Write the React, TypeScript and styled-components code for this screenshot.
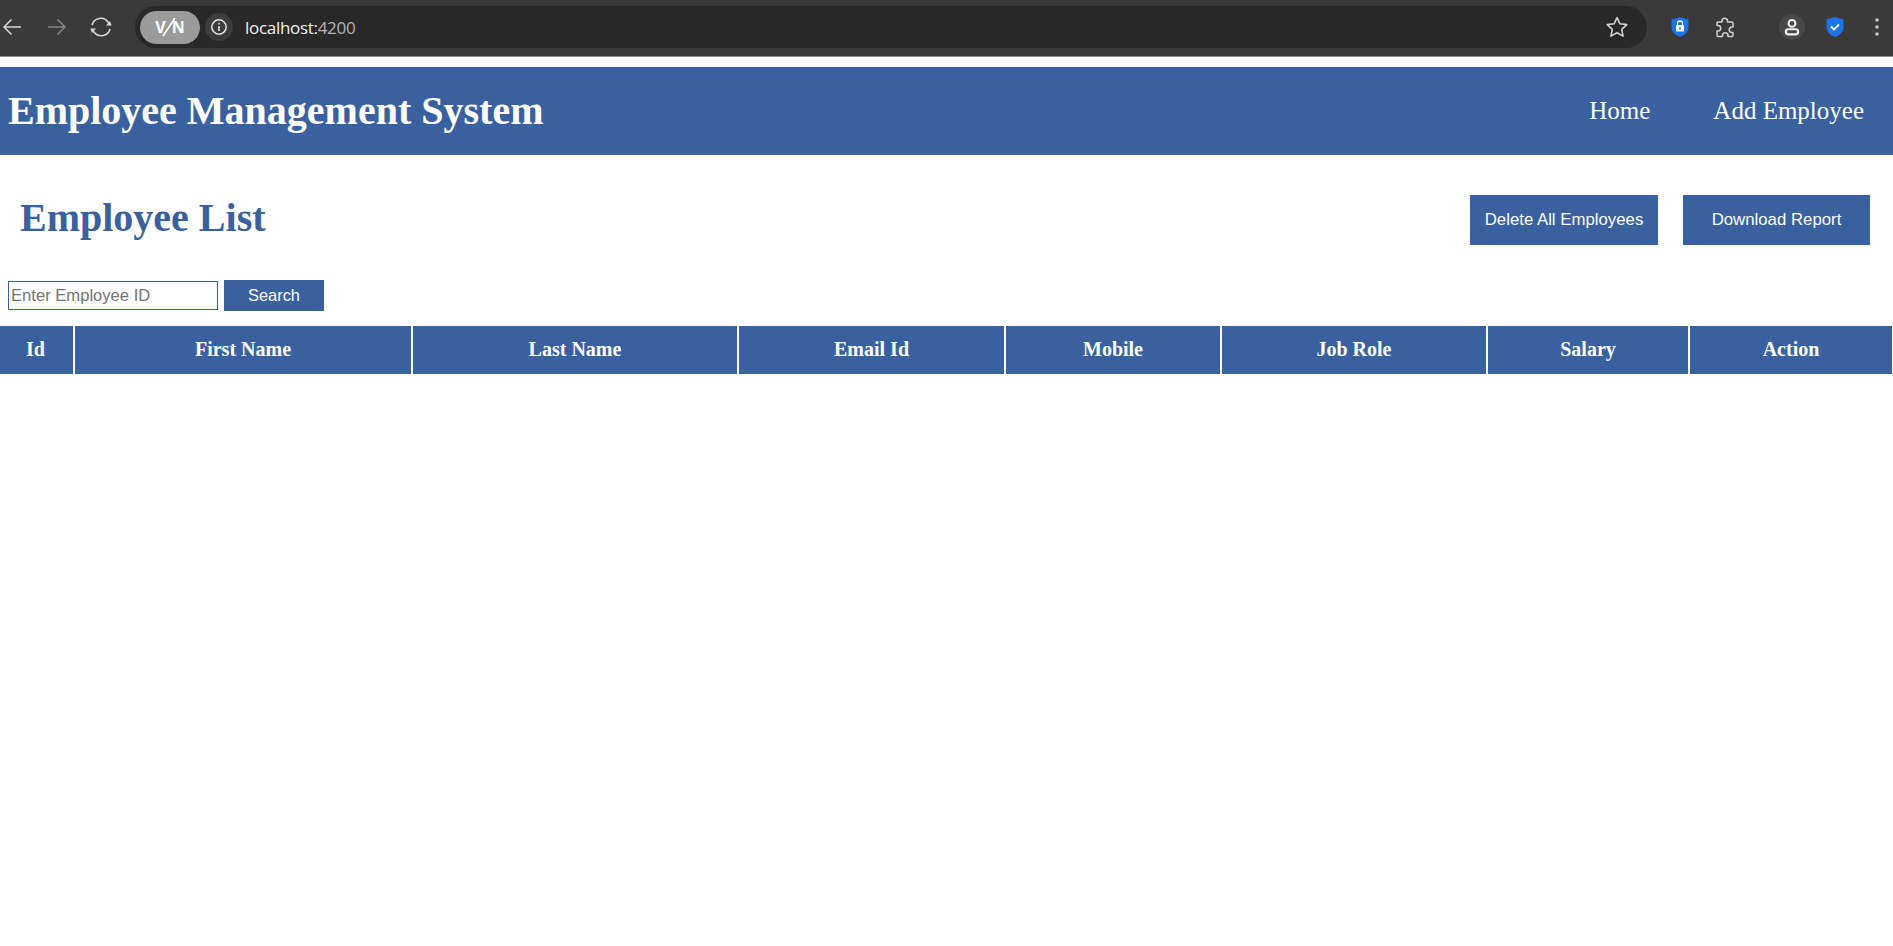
import React from "react";
import styled, { createGlobalStyle } from "styled-components";

const BLUE = "#3a619f";

const Global = createGlobalStyle`
  html, body { margin: 0; padding: 0; background: #fff; }
  body { font-family: "Liberation Serif", "Times New Roman", serif; }
  * { box-sizing: border-box; }
`;

const Page = styled.div`
  width: 1893px;
  height: 946px;
  overflow: hidden;
  background: #fff;
`;

const BrowserBar = styled.div`
  height: 57px;
  background: #3a3a3a;
  border-bottom: 1px solid #8a8a8a;
  display: flex;
  align-items: center;
  padding: 0 0 2px 0;
`;

const NavIcons = styled.div`
  width: 135px;
  display: flex;
  align-items: center;
  flex: none;
`;

const IconSlot = styled.span<{ $w: number; $ml?: number }>`
  display: flex;
  align-items: center;
  justify-content: center;
  flex: none;
  width: ${(p) => p.$w}px;
  margin-left: ${(p) => p.$ml ?? 0}px;
`;

const AddressBar = styled.div`
  width: 1512px;
  height: 42px;
  flex: none;
  border-radius: 21px;
  background: #282828;
  display: flex;
  align-items: center;
  padding: 0 18px 0 5px;
`;

const VpnPill = styled.div`
  width: 60px;
  height: 33px;
  border-radius: 17px;
  background: #9b9b9b;
  color: #fff;
  font: 700 16px "Open Sans", "Liberation Sans", sans-serif;
  display: flex;
  align-items: center;
  justify-content: center;
  flex: none;
  svg { margin: 0 -4px; }
`;

const InfoChip = styled.div`
  width: 28px;
  height: 28px;
  margin-left: 5px;
  border-radius: 50%;
  background: #3c3c3c;
  display: flex;
  align-items: center;
  justify-content: center;
  flex: none;
`;

const Url = styled.div`
  margin-left: 12px;
  font: 400 17px "Open Sans", "Noto Sans", sans-serif;
  letter-spacing: -0.3px;
  color: #f0f0f0;
  flex: 1;
  span { color: #b4b4b4; }
`;

const Extensions = styled.div`
  flex: 1;
  display: flex;
  align-items: center;
`;

const Avatar = styled.div`
  width: 26px;
  height: 26px;
  border-radius: 50%;
  background: #484848;
  display: flex;
  align-items: center;
  justify-content: center;
  flex: none;
  margin-left: 43px;
`;

const Gap = styled.div`
  height: 10px;
`;

const Header = styled.header`
  height: 88px;
  background: ${BLUE};
  display: flex;
  align-items: center;
  justify-content: space-between;
  padding: 0 29px 0 8px;
  color: #fff;
`;

const Brand = styled.div`
  font-size: 40px;
  font-weight: 700;
  margin-top: -2px;
`;

const Nav = styled.nav`
  display: flex;
  gap: 63px;
  font-size: 25px;
`;

const TitleRow = styled.div`
  height: 125px;
  display: flex;
  align-items: center;
  justify-content: space-between;
  padding: 0 23px 0 20px;
`;

const Title = styled.h2`
  margin: 0;
  font-size: 40px;
  font-weight: 700;
  color: ${BLUE};
`;

const Actions = styled.div`
  display: flex;
  gap: 25px;
  margin-top: 5px;
`;

const ActionButton = styled.button<{ $w: number }>`
  width: ${(p) => p.$w}px;
  height: 50px;
  border: 0;
  padding: 0;
  background: ${BLUE};
  color: #fff;
  font: 400 16.8px "Liberation Sans", Arial, sans-serif;
`;

const SearchRow = styled.div`
  display: flex;
  align-items: center;
  gap: 6px;
  height: 31px;
  padding-left: 8px;
`;

const SearchInput = styled.input`
  width: 210px;
  height: 29px;
  border: 1px solid ${BLUE};
  padding: 0 2px;
  font: 400 16.6px "Liberation Sans", Arial, sans-serif;
  background: #fff;
  &::placeholder { color: #757575; opacity: 1; }
`;

const SearchButton = styled.button`
  width: 100px;
  height: 31px;
  border: 0;
  background: ${BLUE};
  color: #fff;
  font: 400 16.4px "Liberation Sans", Arial, sans-serif;
`;

const Table = styled.table`
  margin-top: 15px;
  width: 1893px;
  table-layout: fixed;
  border-collapse: separate;
  border-spacing: 0;
`;

const HeadCell = styled.th<{ $w: number }>`
  width: ${(p) => p.$w}px;
  height: 48px;
  padding: 0 0 1px;
  background: ${BLUE};
  color: #fff;
  font-size: 20px;
  font-weight: 700;
  text-align: center;
  border-right: 2px solid #fff;
  &:first-child { padding-right: 2px; }
  &:last-child { border-right-width: 1px; }
`;

const columns: [string, number][] = [
  ["Id", 75],
  ["First Name", 338],
  ["Last Name", 326],
  ["Email Id", 267],
  ["Mobile", 216],
  ["Job Role", 266],
  ["Salary", 202],
  ["Action", 203],
];

const Back = () => (
  <svg width="20" height="20" viewBox="0 0 20 20" fill="none" stroke="#d6d6d6" strokeWidth="1.5">
    <path d="M19 10H2M9.5 2.500 2 10l7.500 7.500" />
  </svg>
);

export default function App() {
  return (
    <Page>
      <Global />
      <BrowserBar>
        <NavIcons>
          <IconSlot $w={20} $ml={2}><Back /></IconSlot>
          <IconSlot $w={20} $ml={25}>
            <svg width="20" height="20" viewBox="0 0 20 20" fill="none" stroke="#858585" strokeWidth="1.5">
              <path d="M1 10h17M10.500 2.500 18 10l-7.500 7.500" />
            </svg>
          </IconSlot>
          <IconSlot $w={26} $ml={21}>
            <svg width="26" height="24" viewBox="0 0 26 24" fill="none" stroke="#d6d6d6" strokeWidth="1.6">
              <path d="M4 10a9 9 0 0 1 16-3l2 3" />
              <path d="M22 14a9 9 0 0 1-16 3l-2-3" />
              <path d="m18 10.500 5.500 0 0-.5-1.500-4z" fill="#d6d6d6" stroke="none" />
              <path d="m8 13.500-5.500 0 0 .5 1.500 4z" fill="#d6d6d6" stroke="none" />
            </svg>
          </IconSlot>
        </NavIcons>
        <AddressBar>
          <VpnPill>
            <span>V</span>
            <svg width="14" height="20" viewBox="0 0 14 20" fill="none" stroke="#fff" strokeWidth="1.6">
              <path d="M1 19 13 1" />
            </svg>
            <span>N</span>
          </VpnPill>
          <InfoChip>
            <svg width="18" height="18" viewBox="0 0 18 18" fill="none" stroke="#e6e6e6" strokeWidth="1.5">
              <circle cx="9" cy="9" r="7.200" />
              <path d="M9 8v5M9 5v1.500" />
            </svg>
          </InfoChip>
          <Url>localhost:<span>4200</span></Url>
          <svg width="24" height="24" viewBox="0 0 24 24" fill="none" stroke="#cfcfcf" strokeWidth="1.6" strokeLinejoin="round">
            <path d="m12 2.500 2.900 6.300 6.900.8-5.100 4.700 1.400 6.800-6.100-3.400-6.100 3.400 1.400-6.800-5.100-4.700 6.900-.8z" />
          </svg>
        </AddressBar>
        <Extensions>
          <IconSlot $w={20} $ml={23}>
            <svg width="20" height="22" viewBox="0 0 20 22">
              <path d="M10 1 18.500 3.500V11c0 5-4 8.500-8.500 10C5.500 19.500 1.500 16 1.500 11V3.500z" fill="#1a73e8" />
              <rect x="6" y="9" width="8" height="6.500" rx="1" fill="#fff" />
              <path d="M7.500 9V7.500a2.500 2.500 0 0 1 5 0V9" fill="none" stroke="#fff" strokeWidth="1.300" />
              <rect x="9.300" y="11" width="1.400" height="2.500" fill="#1a73e8" />
            </svg>
          </IconSlot>
          <IconSlot $w={22} $ml={24}>
            <svg width="22" height="22" viewBox="0 0 22 22" fill="none" stroke="#cfcfcf" strokeWidth="1.5" strokeLinejoin="round">
              <path d="M8 4.500a2.800 2.800 0 0 1 5.500 0V6h4.500a1 1 0 0 1 1 1v4h-1.500a2.800 2.800 0 0 0 0 5.500H19v3a1 1 0 0 1-1 1h-4v-1.500a2.800 2.800 0 0 0-5.500 0V20.500H4a1 1 0 0 1-1-1V15h1.500a2.800 2.800 0 0 0 0-5.500H3V7a1 1 0 0 1 1-1h4z" />
            </svg>
          </IconSlot>
          <Avatar>
            <svg width="18" height="18" viewBox="0 0 16 16" fill="none" stroke="#f2f2f2" strokeWidth="1.900">
              <circle cx="8" cy="4.800" r="3" />
              <rect x="2.500" y="10" width="11" height="4.500" rx="2.200" />
            </svg>
          </Avatar>
          <IconSlot $w={20} $ml={20}>
            <svg width="20" height="22" viewBox="0 0 20 22">
              <path d="M10 1 18.500 3.500V11c0 5-4 8.500-8.500 10C5.500 19.500 1.500 16 1.500 11V3.500z" fill="#1a73e8" />
              <path d="m6 10.500 3 3 5-5" fill="none" stroke="#fff" strokeWidth="1.800" />
            </svg>
          </IconSlot>
          <IconSlot $w={6} $ml={29}>
            <svg width="6" height="20" viewBox="0 0 6 20" fill="#c8c8c8">
              <circle cx="3" cy="3" r="1.800" />
              <circle cx="3" cy="10" r="1.800" />
              <circle cx="3" cy="17" r="1.800" />
            </svg>
          </IconSlot>
        </Extensions>
      </BrowserBar>
      <Gap />
      <Header>
        <Brand>Employee Management System</Brand>
        <Nav>
          <span>Home</span>
          <span>Add Employee</span>
        </Nav>
      </Header>
      <TitleRow>
        <Title>Employee List</Title>
        <Actions>
          <ActionButton $w={188}>Delete All Employees</ActionButton>
          <ActionButton $w={187}>Download Report</ActionButton>
        </Actions>
      </TitleRow>
      <SearchRow>
        <SearchInput placeholder="Enter Employee ID" />
        <SearchButton>Search</SearchButton>
      </SearchRow>
      <Table>
        <thead>
          <tr>
            {columns.map(([label, w]) => (
              <HeadCell key={label} $w={w}>{label}</HeadCell>
            ))}
          </tr>
        </thead>
      </Table>
    </Page>
  );
}
